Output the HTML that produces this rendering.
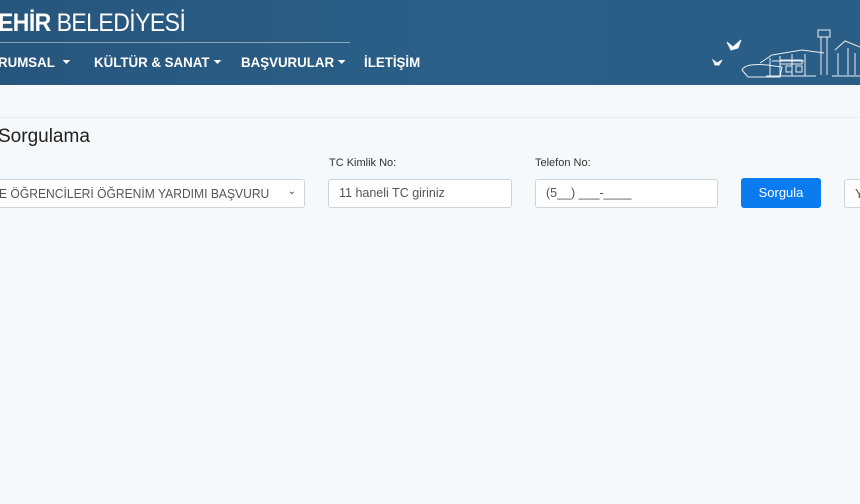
<!DOCTYPE html>
<html><head><meta charset="utf-8"><style>
*{box-sizing:border-box;margin:0;padding:0}
body{width:860px;height:504px;overflow:hidden;background:#f5f9fc;font-family:"Liberation Sans",sans-serif;position:relative}
.hdr{position:absolute;left:0;top:0;width:860px;height:85px;background:linear-gradient(90deg,#27567d 0%,#2b5f87 50%,#2a5e86 100%)}
.logo{position:absolute;left:-2px;top:9px;color:#fff;font-size:25px;letter-spacing:-0.6px;transform:scaleX(.92);transform-origin:left}
.logo b{font-weight:bold}
.line{position:absolute;left:0;top:42px;width:350px;height:1px;background:rgba(255,255,255,.45)}
.nav{position:absolute;top:54px;color:#fff;font-weight:bold;font-size:14px;white-space:nowrap;transform:scaleX(.95);transform-origin:left}
.car{display:inline-block;border-left:4px solid transparent;border-right:4px solid transparent;border-top:4px solid #fff;vertical-align:3px;margin-left:4px}
.sep{position:absolute;top:117px;left:0;width:860px;height:1px;background:#e8edf2}
h2{position:absolute;left:-2px;top:126px;font-size:19px;font-weight:normal;color:#222}
.lbl{position:absolute;top:157px;font-size:11px;color:#333}
.box{position:absolute;top:179px;height:29px;background:#fff;border:1px solid #ced4da;border-radius:3px;font-size:13px;color:#555;padding:6px 10px;white-space:nowrap;overflow:hidden}
.btn{position:absolute;left:741px;top:178px;width:80px;height:30px;background:#0b7bf0;border-radius:3px;color:#fff;font-size:13px;text-align:center;line-height:30px}
</style></head><body>
<div class="hdr">
<div class="logo"><b>EHİR</b> BELEDİYESİ</div>
<div class="line"></div>
<div class="nav" style="left:-2px">RUMSAL<span class="car" style="margin-left:8px"></span></div>
<div class="nav" style="left:94px">KÜLTÜR &amp; SANAT<span class="car"></span></div>
<div class="nav" style="left:241px">BAŞVURULAR<span class="car"></span></div>
<div class="nav" style="left:364px">İLETİŞİM</div>
<svg style="position:absolute;left:710px;top:28px" width="150" height="57" viewBox="0 0 150 57" fill="none" stroke="#e8eef5" stroke-width="1">
<path d="M17 14l6 5 8-7-3 8-7 2z" fill="#fff"/><path d="M3 32l4 3 5-3-3 5-4 0z" fill="#fff"/>
<path d="M32 42c3-6 15-6 25-5l15 2-2 10H38zM50 35l12-8 30-5 22 3M56 48h50M60 30v18M70 28v20M82 26v22M95 26v22M62 33h32"/>
<rect x="108" y="2" width="12" height="7"/><path d="M111 9v38M117 9v38M125 22l10-9 15 6M122 48h28M128 25v22M138 20v27M145 25v22"/>
<rect x="76" y="38" width="6" height="6"/><rect x="86" y="38" width="6" height="6"/><rect x="70" y="32" width="22" height="4"/>
</svg>
</div>
<div class="sep"></div>
<h2>Sorgulama</h2>
<div class="lbl" style="left:329px">TC Kimlik No:</div>
<div class="lbl" style="left:535px">Telefon No:</div>
<div class="box" style="left:-10px;width:315px;padding-left:8px"><span style="display:inline-block;transform:scaleX(.93);transform-origin:left">E ÖĞRENCİLERİ ÖĞRENİM YARDIMI BAŞVURU</span><span style="position:absolute;right:8px;top:6px;font-size:10px;color:#444;background:#fff">&#8964;</span></div>
<div class="box" style="left:328px;width:184px;font-size:12.5px">11 haneli TC giriniz</div>
<div class="box" style="left:535px;width:183px;font-size:12.5px">(5__) ___-____</div>
<div class="btn">Sorgula</div>
<div class="box" style="left:844px;width:40px">Y</div>
</body></html>
